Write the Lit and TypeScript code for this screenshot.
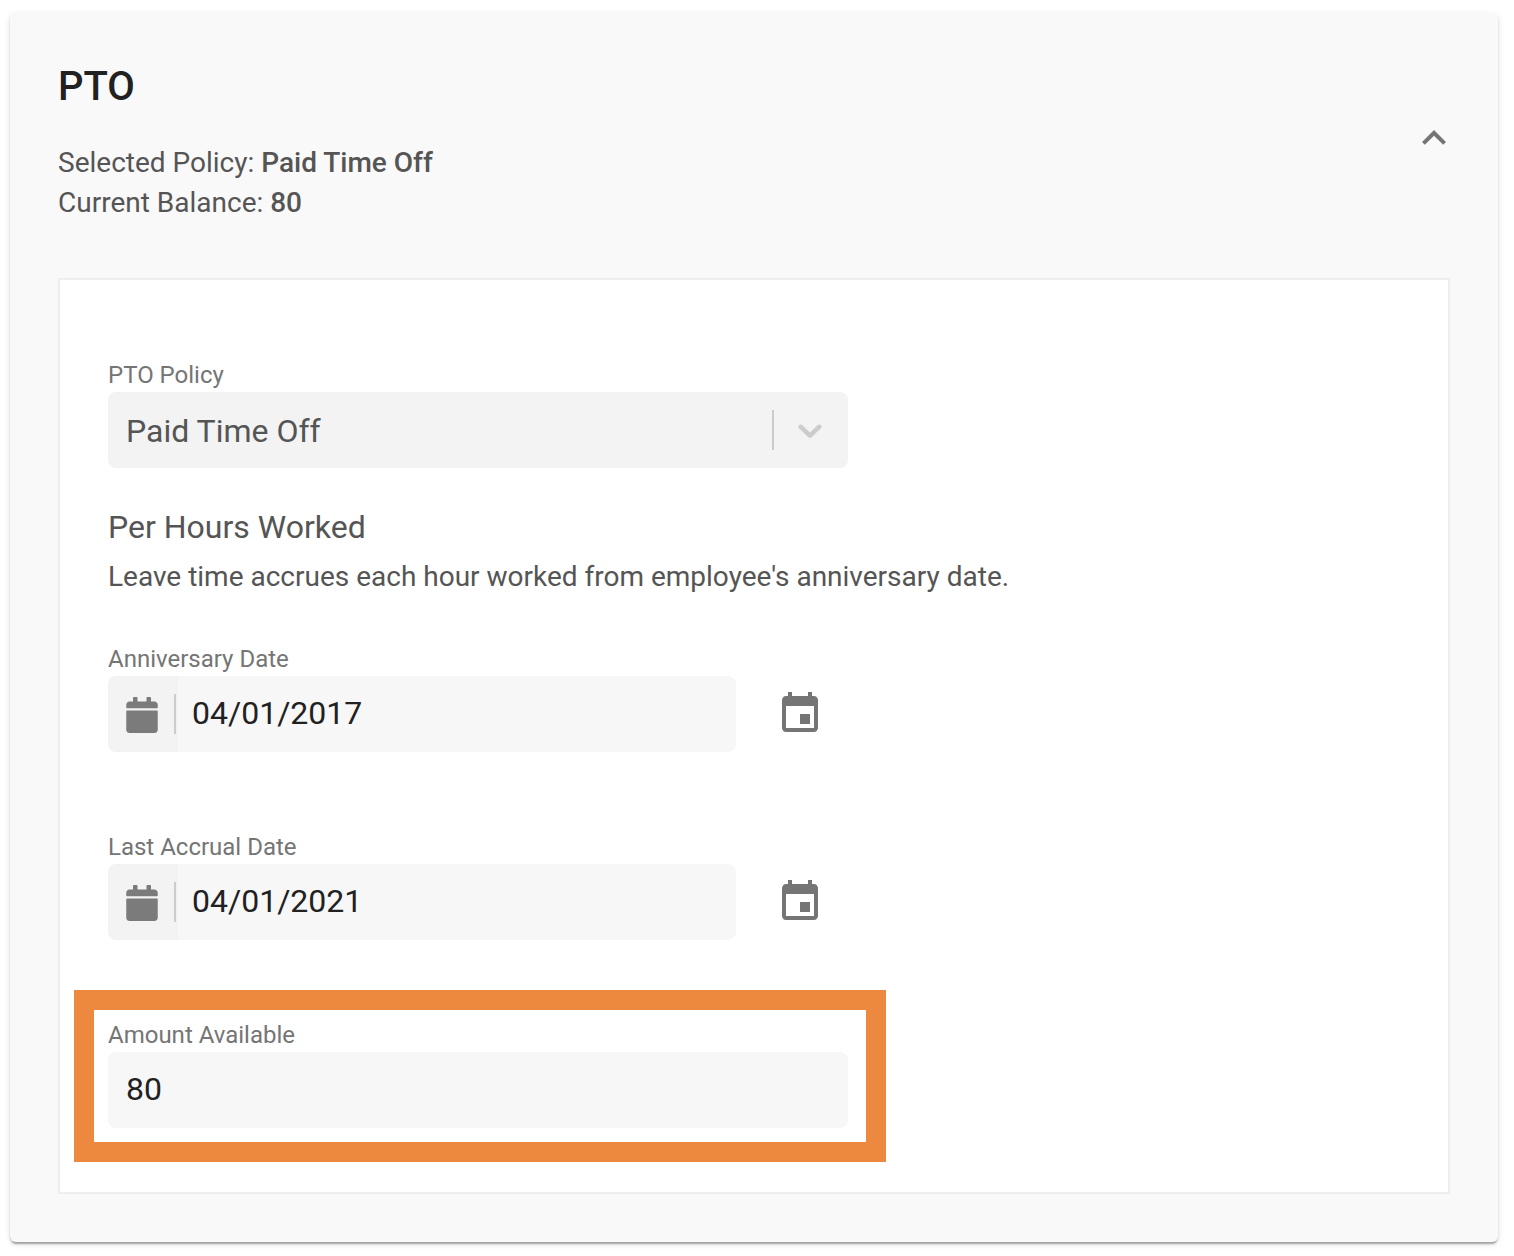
import { LitElement, html, css, svg } from "lit";
import { customElement, property, state } from "lit/decorators.js";

const expandLess = svg`<path d="M12 8l-6 6 1.41 1.41L12 10.83l4.59 4.58L18 14z"/>`;
const eventIcon = svg`<path d="M17 12h-5v5h5v-5zM16 1v2H8V1H6v2H5c-1.11 0-1.99.9-1.99 2L3 19c0 1.1.89 2 2 2h14c1.1 0 2-.9 2-2V5c0-1.1-.9-2-2-2h-1V1h-2zm3 18H5V8h14v11z"/>`;
const calendarIcon = svg`<path d="M12 192h424c6.6 0 12 5.4 12 12v260c0 26.5-21.5 48-48 48H48c-26.5 0-48-21.5-48-48V204c0-6.6 5.4-12 12-12zm436-44v-36c0-26.5-21.5-48-48-48h-48V12c0-6.6-5.4-12-12-12h-40c-6.6 0-12 5.4-12 12v52H160V12c0-6.6-5.4-12-12-12h-40c-6.6 0-12 5.4-12 12v52H48C21.5 64 0 85.5 0 112v36c0 6.6 5.4 12 12 12h424c6.6 0 12-5.4 12-12z"/>`;
const selectArrow = svg`<path d="M4.516 7.548c0.436-0.446 1.043-0.481 1.576 0l3.908 3.747 3.908-3.747c0.533-0.481 1.141-0.446 1.574 0 0.436 0.445 0.408 1.197 0 1.615-0.406 0.418-4.695 4.502-4.695 4.502-0.217 0.223-0.502 0.335-0.787 0.335s-0.57-0.112-0.789-0.335c0 0-4.287-4.084-4.695-4.502s-0.436-1.17 0-1.615z"/>`;

const fieldStyles = css`
  * {
    box-sizing: border-box;
  }
  .field {
    display: flex;
    flex-direction: column;
    max-width: 740px;
  }
  .label {
    font-size: 24px;
    line-height: 34px;
    color: #757575;
  }
  .control {
    width: 100%;
    min-width: 0;
    height: 76px;
    margin: 0;
    border: 0;
    border-radius: 8px;
    background: #f7f7f7;
    color: #212121;
    font-family: inherit;
    font-size: 32px;
    padding: 0 18px 2px;
  }
  .divider {
    width: 2px;
    height: 40px;
    background: #cccccc;
  }
  button {
    display: flex;
    padding: 0;
    border: 0;
    background: none;
    color: #757575;
    cursor: pointer;
  }
  svg {
    display: block;
    fill: currentColor;
  }
`;

@customElement("date-field")
export class DateField extends LitElement {
  @property() label = "";
  @property() value = "";

  static styles = [
    fieldStyles,
    css`
      :host {
        display: block;
      }
      .row {
        display: flex;
        align-items: center;
        gap: 40px;
      }
      .box {
        display: flex;
        flex: 0 1 628px;
        min-width: 0;
        border-radius: 8px;
        overflow: hidden;
      }
      .prefix {
        display: flex;
        flex: none;
        align-items: center;
        justify-content: space-between;
        width: 70px;
        padding: 0 2px 0 18px;
        background: #f3f3f3;
        color: #7b7b7b;
      }
      .prefix svg {
        margin-top: 2px;
      }
      .control {
        border-radius: 0;
        padding-left: 14px;
      }
    `,
  ];

  render() {
    return html`
      <div class="field">
        <label class="label" for="date">${this.label}</label>
        <div class="row">
          <div class="box">
            <span class="prefix">
              <svg width="32" height="36" viewBox="0 0 448 512" aria-hidden="true">${calendarIcon}</svg>
              <span class="divider"></span>
            </span>
            <input class="control" id="date" type="text" .value=${this.value} />
          </div>
          <button type="button" aria-label="Choose date">
            <svg width="48" height="48" viewBox="0 0 24 24" aria-hidden="true">${eventIcon}</svg>
          </button>
        </div>
      </div>
    `;
  }
}

@customElement("app-root")
export class AppRoot extends LitElement {
  @state() private open = true;

  static styles = [
    fieldStyles,
    css`
      :host {
        display: block;
        padding: 13px 16px 14px 10px;
        background: #ffffff;
        font-family: Roboto, "Liberation Sans", sans-serif;
        color: #555555;
      }
      .card {
        padding: 48px;
        border-radius: 6px;
        background: #f9f9f9;
        box-shadow: 0 4px 2px -2px rgba(0, 0, 0, 0.2), 0 2px 2px rgba(0, 0, 0, 0.14),
          0 2px 6px rgba(0, 0, 0, 0.12);
      }
      .header {
        display: flex;
        align-items: center;
        justify-content: space-between;
      }
      .title {
        margin: 0 0 30px;
        font-size: 40px;
        line-height: 52px;
        font-weight: 500;
        color: #212121;
      }
      .summary {
        margin: 0;
        font-size: 28px;
        line-height: 40px;
      }
      .summary strong {
        font-weight: 500;
      }
      .toggle {
        margin: 0 -8px 8px 0;
      }
      .toggle.closed {
        transform: rotate(180deg);
      }
      .panel {
        display: flex;
        flex-direction: column;
        gap: 78px;
        margin-top: 55px;
        padding: 78px 48px 64px;
        border: 2px solid #eeeeee;
        background: #ffffff;
      }
      .panel[hidden] {
        display: none;
      }
      .select {
        display: grid;
        align-items: center;
      }
      .select .control {
        grid-area: 1 / 1;
        appearance: none;
        background: #f3f3f3;
        color: #555555;
        padding: 2px 18px 0;
      }
      .indicator {
        grid-area: 1 / 1;
        justify-self: end;
        display: flex;
        gap: 16px;
        padding-right: 18px;
        color: #cccccc;
        pointer-events: none;
      }
      .rule {
        margin: 39px 0 -33px;
      }
      .rule-title {
        margin: 0 0 10px;
        font-size: 32px;
        line-height: 40px;
        font-weight: 400;
      }
      .rule-text {
        margin: 0;
        font-size: 28px;
        line-height: 40px;
      }
      .highlight {
        position: relative;
      }
      .highlight::after {
        content: "";
        position: absolute;
        inset: -28px -38px -34px -34px;
        border: 20px solid #ec893e;
        pointer-events: none;
      }
    `,
  ];

  render() {
    return html`
      <section class="card">
        <header class="header">
          <div>
            <h2 class="title">PTO</h2>
            <p class="summary">Selected Policy: <strong>Paid Time Off</strong></p>
            <p class="summary">Current Balance: <strong>80</strong></p>
          </div>
          <button
            type="button"
            class="toggle ${this.open ? "" : "closed"}"
            aria-label="Toggle PTO details"
            aria-expanded=${this.open ? "true" : "false"}
            @click=${() => (this.open = !this.open)}
          >
            <svg width="48" height="48" viewBox="0 0 24 24" aria-hidden="true">${expandLess}</svg>
          </button>
        </header>
        <div class="panel" ?hidden=${!this.open}>
          <div>
            <div class="field">
              <label class="label" for="policy">PTO Policy</label>
              <div class="select">
                <select class="control" id="policy">
                  <option>Paid Time Off</option>
                </select>
                <span class="indicator">
                  <span class="divider"></span>
                  <svg width="40" height="40" viewBox="0 0 20 20" aria-hidden="true">${selectArrow}</svg>
                </span>
              </div>
            </div>
            <div class="rule">
              <h3 class="rule-title">Per Hours Worked</h3>
              <p class="rule-text">Leave time accrues each hour worked from employee's anniversary date.</p>
            </div>
          </div>
          <date-field label="Anniversary Date" value="04/01/2017"></date-field>
          <date-field label="Last Accrual Date" value="04/01/2021"></date-field>
          <div class="field highlight">
            <label class="label" for="amount">Amount Available</label>
            <input class="control" id="amount" type="text" value="80" />
          </div>
        </div>
      </section>
    `;
  }
}
